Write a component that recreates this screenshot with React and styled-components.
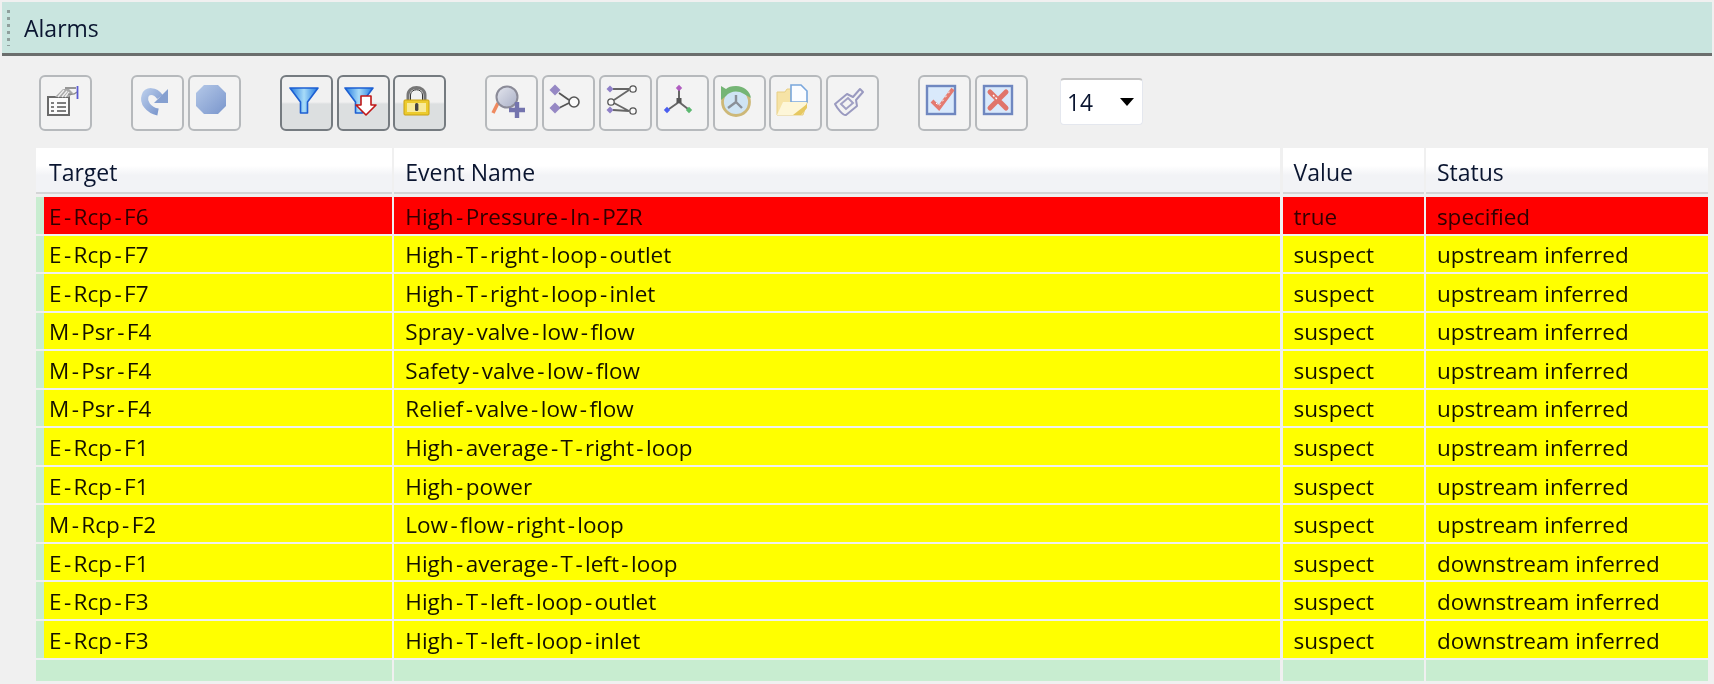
import React from "react";
import styled, { createGlobalStyle } from "styled-components";

const Global = createGlobalStyle`
  html, body { margin: 0; padding: 0; background: #f0f0f0; }
  body { width: 1714px; height: 684px; overflow: hidden; font-family: "Open Sans", "Noto Sans", sans-serif; color: #111; }
`;

const Page = styled.div`
  display: flex;
  flex-direction: column;
  height: 684px;
  padding: 2px 2px 0;
  box-sizing: border-box;
  background: #f0f0f0;
  filter: blur(0.45px);
`;

const TitleBar = styled.header`
  display: flex;
  align-items: center;
  gap: 14px;
  height: 54px;
  flex: none;
  padding-left: 5px;
  box-sizing: border-box;
  background: #c9e5df;
  border-bottom: 3px solid #6b6e6d;
`;

const Grip = styled.span`
  width: 3px;
  height: 36px;
  background: repeating-linear-gradient(to bottom, #8f9f9c 0 3px, transparent 3px 7px);
`;

const Title = styled.h1`
  margin: 0;
  font-size: 23px;
  font-weight: 400;
  color: #0a1530;
`;

const Toolbar = styled.div`
  display: flex;
  align-items: center;
  gap: 39px;
  height: 56px;
  margin-top: 19px;
  padding-left: 37px;
  flex: none;
`;

const ToolGroup = styled.div`
  display: flex;
  gap: 3.8px;
`;

const ToolButton = styled.button`
  width: 53px;
  height: 56px;
  padding: 0;
  box-sizing: border-box;
  border-radius: 6px;
  border: 2px solid ${(p) => (p.$pressed ? "#757b80" : "#b6b9bc")};
  background: ${(p) =>
    p.$pressed
      ? "linear-gradient(to bottom, #f1f1f1 0 48%, #dcdfe0 52% 100%)"
      : "#f3f3f3"};
  flex: none;
  svg { display: block; width: 49px; height: 52px; }
`;

const SizeSelect = styled.div`
  display: flex;
  align-items: center;
  justify-content: space-between;
  width: 83px;
  height: 47px;
  margin: -3px 0 0 -7px;
  padding: 0 8px 0 6px;
  box-sizing: border-box;
  background: #fff;
  border-radius: 4px;
  border: 1px solid #e4e7ee;
  border-top: 2px solid #c3c3c3;
  font-size: 22.8px;
  color: #0a1530;
`;

const Caret = styled.span`
  width: 0;
  height: 0;
  border-left: 7.5px solid transparent;
  border-right: 7.5px solid transparent;
  border-top: 8px solid #000;
`;

const Table = styled.div`
  display: grid;
  grid-template-columns: 356px 886px 141px 282px;
  column-gap: 2.3px;
  margin: 17px 0 0 34px;
  width: 1672px;
`;

const HeadCell = styled.div`
  display: flex;
  align-items: center;
  height: 46px;
  padding: 4px 0 0 ${(p) => (p.$first ? "13px" : "11px")};
  box-sizing: border-box;
  background: linear-gradient(to bottom, #fff 0 40%, #f2f3f6 62% 100%);
  border-bottom: 2px solid #d4d5d6;
  font-size: 23px;
  color: #0a1530;
  margin-bottom: 3px;
`;

const Cell = styled.div`
  display: flex;
  align-items: center;
  height: 36.5px;
  margin-bottom: 2.05px;
  padding: 2px 0 0 ${(p) => (p.$first ? "5px" : "11px")};
  box-sizing: border-box;
  font-size: 22.5px;
  white-space: nowrap;
  color: ${(p) => (p.$tone === "red" ? "#300000" : "#141000")};
  background: ${(p) => (p.$tone === "red" ? "#ff0000" : p.$tone === "yellow" ? "#ffff00" : "#c8edd0")};
  ${(p) => p.$first && `border-left: 8px solid #c8edd0;`}
`;

const EmptyCell = styled(Cell)`
  height: 21px;
  margin-bottom: 0;
  border-left: 0;
`;

const Dash = styled.span`
  padding: 0 2.4px;
`;

const Defs = () => (
  <svg width="0" height="0" style={{ position: "absolute" }}>
    <defs>
      <linearGradient id="steel" x1="0" y1="0" x2="1" y2="1">
        <stop offset="0" stopColor="#b4c8e8" />
        <stop offset="1" stopColor="#7a96cc" />
      </linearGradient>
      <linearGradient id="funnel" x1="0" y1="0" x2="1" y2="0">
        <stop offset="0" stopColor="#1f78e0" />
        <stop offset="0.5" stopColor="#a8dcf8" />
        <stop offset="1" stopColor="#1f78e0" />
      </linearGradient>
      <linearGradient id="lens" x1="0" y1="0" x2="1" y2="1">
        <stop offset="0" stopColor="#e4e6ee" />
        <stop offset="1" stopColor="#a9afc6" />
      </linearGradient>
    </defs>
  </svg>
);

const Svg = ({ children }) => <svg viewBox="2 2 49 52">{children}</svg>;

const Diamond = ({ x, y, r, fill }) => (
  <polygon points={`${x},${y - r} ${x + r},${y} ${x},${y + r} ${x - r},${y}`} fill={fill} />
);

const icons = {
  props: (
    <Svg>
      <path d="M9 22h21v18H9z" fill="#fbfbfb" stroke="#6a6a6a" strokeWidth="2" />
      <path d="M16 22l8-8h6l4 4-4 4z" fill="#a9a9a9" />
      <path d="M19 22l6-7M23 22l5-6M26 22l4-5" stroke="#eee" strokeWidth="1.4" />
      <path d="M26 13h11" stroke="#777" strokeWidth="1.5" />
      <path d="M29 19c4 1 7 0 9-2" stroke="#888" fill="none" strokeWidth="1.2" />
      <path d="M38.5 11v13" stroke="#5a5ad2" strokeWidth="1.8" />
      <path d="M12 28h3M18 28h9M12 32h3M18 32h9M12 36h3M18 36h9" stroke="#555" strokeWidth="1.6" />
    </Svg>
  ),
  redo: (
    <Svg>
      <path d="M27 37C17 35 12 27 14 21c2-6 10-6 15 1" fill="none" stroke="url(#steel)" strokeWidth="7" />
      <polygon points="37,14 37,28 23,28" fill="#86a0d0" />
    </Svg>
  ),
  stop: (
    <Svg>
      <polygon points="16,10 30,10 38,18 38,31 30,39 16,39 8,31 8,18" fill="url(#steel)" />
    </Svg>
  ),
  filter: (
    <Svg>
      <path d="M10 13h28L27.5 27v11h-7V27z" fill="url(#funnel)" stroke="#1d5fd2" strokeWidth="1.6" strokeLinejoin="round" />
    </Svg>
  ),
  filterDown: (
    <Svg>
      <path d="M8 13h28L25.5 27v11h-7V27z" fill="url(#funnel)" stroke="#1d5fd2" strokeWidth="1.6" strokeLinejoin="round" />
      <path d="M24 21h10v9h5L29 40 19 30h5z" fill="#fff" stroke="#c01818" strokeWidth="1.6" strokeLinejoin="round" />
    </Svg>
  ),
  lock: (
    <Svg>
      <path d="M15 26v-6c0-10 17-10 17 0v6" fill="none" stroke="#777" strokeWidth="3" />
      <path d="M17.5 26v-6c0-7 12-7 12 0v6" fill="none" stroke="#333" strokeWidth="1" />
      <rect x="11" y="25" width="25" height="15" rx="1" fill="#eccb2e" stroke="#c9a010" />
      <rect x="14" y="28" width="19" height="9" fill="#f8ea98" />
      <rect x="22" y="28" width="3.4" height="8" rx="1.5" fill="#444" />
    </Svg>
  ),
  zoom: (
    <Svg>
      <path d="M13 28l-5 10" stroke="#ef8a60" strokeWidth="3.5" />
      <circle cx="22" cy="22" r="10.5" fill="url(#lens)" stroke="#8b8b98" strokeWidth="2" />
      <path d="M32 27v16M24 35h16" stroke="#7474ae" strokeWidth="4.4" />
    </Svg>
  ),
  merge: (
    <Svg>
      <path d="M17 18l10 7M17 33l10-5" stroke="#555" strokeWidth="1.8" />
      <Diamond x={13} y={15} r={5.5} fill="#9688c4" />
      <Diamond x={13} y={33} r={5.5} fill="#9688c4" />
      <circle cx="32" cy="27" r="5" fill="#fafafa" stroke="#555" strokeWidth="1.6" />
    </Svg>
  ),
  branch: (
    <Svg>
      <path d="M14 14h16M14 35l16 1M15 25l15-10M15 28l15 8" stroke="#666" strokeWidth="1.8" />
      <Diamond x={11} y={14} r={3.5} fill="#8f80c8" />
      <Diamond x={11} y={35} r={3.5} fill="#8f80c8" />
      <circle cx="12" cy="27" r="3.2" fill="#fafafa" stroke="#555" strokeWidth="1.3" />
      <circle cx="34" cy="14" r="3.2" fill="#fafafa" stroke="#555" strokeWidth="1.3" />
      <circle cx="34" cy="36" r="3.2" fill="#fafafa" stroke="#555" strokeWidth="1.3" />
    </Svg>
  ),
  axes: (
    <Svg>
      <path d="M23 27V15M23 27L13 34M23 27l9 7" stroke="#666" strokeWidth="2" />
      <rect x="20.5" y="23" width="5" height="5" fill="#555" />
      <Diamond x={23} y={13} r={3.2} fill="#b05cc0" />
      <Diamond x={11} y={35} r={3.2} fill="#4a5ef0" />
      <Diamond x={33} y={35} r={3.2} fill="#5cb870" />
    </Svg>
  ),
  clock: (
    <Svg>
      <circle cx="23" cy="27" r="13.5" fill="#cfe4f4" stroke="#cdb878" strokeWidth="2.8" />
      <path d="M23 27V20M23 27l-8 6M23 27l6 6" stroke="#8a9098" strokeWidth="2.4" />
      <path d="M8 11v14l5-4c4-5 12-6 18-2l7 4c-1-7-7-12-15-12-5 0-8 1-10 3z" fill="#75b575" />
    </Svg>
  ),
  folder: (
    <Svg>
      <path d="M8 17h8l2-3h4v11h16v3l-4 12H8z" fill="#f6e3a6" stroke="#e8cf84" />
      <path d="M22 10h10l6 6v11H22z" fill="#fbfcff" stroke="#79a6dc" strokeWidth="1.6" />
      <path d="M8 40l6-13h24l-6 13z" fill="#fdf6d8" />
      <path d="M24 40l14-11v4l-6 7z" fill="#e6c860" />
    </Svg>
  ),
  plug: (
    <Svg>
      <path d="M9 29l12-10 6 3 7-8 3 3-7 8 1 6-11 9c-3 1-9-7-11-11z" fill="#f3f3f3" stroke="#9a9ac0" strokeWidth="2" strokeLinejoin="round" />
      <path d="M15 29l7-6 5 5-7 6z" fill="none" stroke="#a0a0c4" strokeWidth="2" />
    </Svg>
  ),
  check: (
    <Svg>
      <rect x="9" y="11" width="28" height="28" fill="#d9e9fb" stroke="#6f87c0" strokeWidth="2.4" />
      <path d="M14 26l7 7 14-19" fill="none" stroke="#e47a70" strokeWidth="4" />
      <path d="M18 28l3 3 11-15" fill="none" stroke="#fff" strokeWidth="1" strokeDasharray="2 3" />
    </Svg>
  ),
  cross: (
    <Svg>
      <rect x="9" y="11" width="28" height="28" fill="#d9e9fb" stroke="#6f87c0" strokeWidth="2.4" />
      <path d="M15 17l16 16M31 17L15 33" stroke="#e0746a" strokeWidth="5" strokeLinecap="round" />
      <path d="M18 20l5 5" stroke="#fff" strokeWidth="1.4" strokeDasharray="2 1.5" />
    </Svg>
  ),
};

const groups = [
  ["props"],
  ["redo", "stop"],
  ["filter", "filterDown", "lock"],
  ["zoom", "merge", "branch", "axes", "clock", "folder", "plug"],
  ["check", "cross"],
];
const pressed = new Set(["filter", "filterDown", "lock"]);

const columns = ["Target", "Event Name", "Value", "Status"];

const up = "upstream inferred";
const down = "downstream inferred";
const rows = [
  ["E-Rcp-F6", "High-Pressure-In-PZR", "true", "specified", "red"],
  ["E-Rcp-F7", "High-T-right-loop-outlet", "suspect", up, "yellow"],
  ["E-Rcp-F7", "High-T-right-loop-inlet", "suspect", up, "yellow"],
  ["M-Psr-F4", "Spray-valve-low-flow", "suspect", up, "yellow"],
  ["M-Psr-F4", "Safety-valve-low-flow", "suspect", up, "yellow"],
  ["M-Psr-F4", "Relief-valve-low-flow", "suspect", up, "yellow"],
  ["E-Rcp-F1", "High-average-T-right-loop", "suspect", up, "yellow"],
  ["E-Rcp-F1", "High-power", "suspect", up, "yellow"],
  ["M-Rcp-F2", "Low-flow-right-loop", "suspect", up, "yellow"],
  ["E-Rcp-F1", "High-average-T-left-loop", "suspect", down, "yellow"],
  ["E-Rcp-F3", "High-T-left-loop-outlet", "suspect", down, "yellow"],
  ["E-Rcp-F3", "High-T-left-loop-inlet", "suspect", down, "yellow"],
];

const Spaced = ({ text }) => (
  <span>
    {text.split("-").map((part, i) => (
      <React.Fragment key={i}>
        {i > 0 && <Dash>-</Dash>}
        {part}
      </React.Fragment>
    ))}
  </span>
);

export default function App() {
  return (
    <Page>
      <Global />
      <Defs />
      <TitleBar>
        <Grip />
        <Title>Alarms</Title>
      </TitleBar>
      <Toolbar>
        {groups.map((group) => (
          <ToolGroup key={group[0]}>
            {group.map((name) => (
              <ToolButton key={name} $pressed={pressed.has(name)}>
                {icons[name]}
              </ToolButton>
            ))}
          </ToolGroup>
        ))}
        <SizeSelect>
          14
          <Caret />
        </SizeSelect>
      </Toolbar>
      <Table>
        {columns.map((c, j) => (
          <HeadCell key={c} $first={j === 0}>{c}</HeadCell>
        ))}
        {rows.map((r, i) =>
          r.slice(0, 4).map((text, j) => (
            <Cell key={`${i}-${j}`} $tone={r[4]} $first={j === 0}>
              <Spaced text={text} />
            </Cell>
          ))
        )}
        {columns.map((c) => (
          <EmptyCell key={c} />
        ))}
      </Table>
    </Page>
  );
}
